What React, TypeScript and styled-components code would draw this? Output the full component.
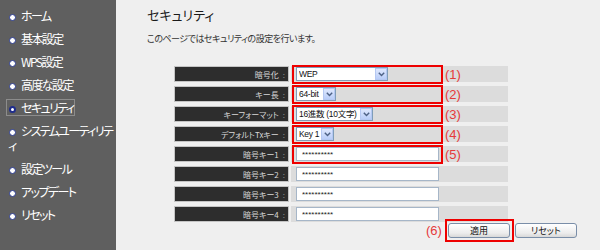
import React from "react";
import styled, { createGlobalStyle } from "styled-components";

const Global = createGlobalStyle`
  html, body { margin: 0; padding: 0; }
  body { width: 600px; height: 250px; overflow: hidden; background: #efefef;
    font-family: "Noto Sans CJK JP", "Liberation Sans", sans-serif; }
`;

const JP = `"Noto Sans CJK JP", "Liberation Sans", sans-serif`;
const Latin = `"Liberation Sans", "Noto Sans CJK JP", sans-serif`;

const Page = styled.div`
  display: flex;
  width: 600px;
  height: 250px;
`;

const Sidebar = styled.nav`
  width: 116px;
  flex: none;
  background: #5f5f5f;
  padding-top: 8px;
  box-sizing: border-box;
`;

const Item = styled.div`
  padding: 0 0 0 6px;
  margin: 0 -4px 8px 0;
  font-family: ${JP};
  font-size: 12px;
  line-height: 15px;
  letter-spacing: -1.6px;
  line-break: anywhere;
  color: #ffffff;
  font-feature-settings: "palt";
`;

const Link = styled.span<{ $active?: boolean }>`
  display: inline-block;
  border: 1px solid ${(p) => (p.$active ? "#8c8c8c" : "transparent")};
  padding: 0 1px;
  margin: -1px 0;
`;

const Bullet = styled.span<{ $active?: boolean }>`
  display: inline-block;
  width: 7px;
  height: 7px;
  box-sizing: border-box;
  border-radius: 50%;
  margin: 0 5px 1px 1px;
  vertical-align: middle;
  background: #ffffff;
  border: ${(p) => (p.$active ? "2px solid #1f2d8c" : "1px solid #2a3a90")};
`;

const Main = styled.main`
  flex: 1;
  padding: 7px 0 0 31px;
  background: #efefef;
`;

const Title = styled.h1`
  margin: 0;
  font-family: ${JP};
  font-size: 13px;
  font-weight: normal;
  line-height: 16px;
  color: #1a1a1a;
  font-feature-settings: "palt";
`;

const Desc = styled.p`
  margin: 9px 0 0;
  font-family: ${JP};
  font-size: 9px;
  letter-spacing: -0.5px;
  line-height: 13px;
  color: #333333;
  font-feature-settings: "palt";
`;

const Table = styled.div`
  margin: 21px 0 0 27px;
  display: grid;
  grid-template-columns: 115px 217px;
  column-gap: 2px;
  row-gap: 4px;
  grid-auto-rows: 16px;
`;

const LabelCell = styled.div`
  background: #2d2d2d;
  border: 1px solid #c4c4c4;
  box-sizing: border-box;
  display: flex;
  align-items: center;
  justify-content: flex-end;
  padding-right: 3px;
  font-family: ${JP};
  font-size: 8px;
  color: #d8d8d8;
  font-feature-settings: "palt";
  white-space: nowrap;
`;

const Colon = styled.span`
  color: #8f8f8f;
  margin-left: 4px;
`;

const ValueCell = styled.div<{ $framed?: boolean }>`
  background: #dcdcdc;
  display: flex;
  align-items: center;
  padding-left: ${(p) => (p.$framed ? 1 : 5)}px;
`;

const Frame = styled.div<{ $w: number; $h: number }>`
  width: ${(p) => p.$w}px;
  height: ${(p) => p.$h}px;
  flex: none;
  box-sizing: border-box;
  border: 2px solid #ee0000;
  padding-left: 2px;
  display: flex;
  align-items: center;
`;

const Note = styled.span`
  margin-left: 2px;
  font-family: ${Latin};
  font-size: 13px;
  color: #e53a3a;
  white-space: nowrap;
`;

const SelectBox = styled.div<{ $w: number }>`
  width: ${(p) => p.$w}px;
  height: 14px;
  box-sizing: border-box;
  border: 1px solid #7f9db9;
  background: #ffffff;
  display: flex;
`;

const NativeSelect = styled.select`
  appearance: none;
  -webkit-appearance: none;
  flex: 1;
  min-width: 0;
  border: none;
  background: transparent;
  padding: 0 0 0 2px;
  margin: 0;
  font-family: ${Latin}, "Noto Sans CJK JP";
  font-size: 8.5px;
  letter-spacing: -0.3px;
  line-height: 12px;
  color: #111;
  outline: none;
  font-feature-settings: "palt";
`;

const ArrowBox = styled.span`
  width: 12px;
  flex: none;
  box-sizing: border-box;
  border: 1px solid #b5c8f2;
  background: linear-gradient(#dfe8fd, #b9cdf8);
  display: flex;
  align-items: center;
  justify-content: center;
`;

const TextInput = styled.input`
  width: 143px;
  height: 14px;
  box-sizing: border-box;
  border: 1px solid #a6b6c8;
  background: #fff;
  padding: 0 0 0 5px;
  margin: 0;
  font-family: ${Latin};
  font-size: 8px;
  color: #222;
  outline: none;
`;

const ButtonRow = styled.div`
  display: flex;
  align-items: center;
  margin: -3px 0 0 277px;
`;

const ButtonFrame = styled.div`
  margin-left: 3px;
  border: 2px solid #ee0000;
  padding: 2px 2px 2px 1px;
  display: flex;
`;

const Button = styled.button`
  width: 62px;
  height: 15px;
  box-sizing: border-box;
  border: 1px solid #7a8ea8;
  border-radius: 3px;
  background: linear-gradient(#ffffff, #ececec 70%, #d8d8d8);
  font-family: ${JP};
  font-size: 9px;
  line-height: 12px;
  padding: 0;
  color: #111;
  font-feature-settings: "palt";
`;

const PlainButton = styled(Button)`
  margin-left: 1px;
`;

const Chevron = () => (
  <svg width="7" height="5" viewBox="0 0 7 5">
    <path d="M0.8 0.8 L3.5 3.6 L6.2 0.8" fill="none" stroke="#4d6185" strokeWidth="1.4" />
  </svg>
);

const Select = ({ w, value }: { w: number; value: string }) => (
  <SelectBox $w={w}>
    <NativeSelect value={value} onChange={() => {}}>
      <option>{value}</option>
    </NativeSelect>
    <ArrowBox>
      <Chevron />
    </ArrowBox>
  </SelectBox>
);

const nav = [
  "ホーム",
  "基本設定",
  "WPS設定",
  "高度な設定",
  "セキュリティ",
  "システムユーティリティ",
  "設定ツール",
  "アップデート",
  "リセット",
];

type Row = { label: string; note?: string; control: React.ReactNode };

const stars = "**********";

const rows: Row[] = [
  { label: "暗号化", note: "(1)", control: <Select w={92} value="WEP" /> },
  { label: "キー長", note: "(2)", control: <Select w={40} value="64-bit" /> },
  { label: "キーフォーマット", note: "(3)", control: <Select w={77} value="16進数 (10文字)" /> },
  { label: "デフォルトTxキー", note: "(4)", control: <Select w={38} value="Key 1" /> },
  { label: "暗号キー1", note: "(5)", control: <TextInput readOnly value={stars} /> },
  { label: "暗号キー2", control: <TextInput readOnly value={stars} /> },
  { label: "暗号キー3", control: <TextInput readOnly value={stars} /> },
  { label: "暗号キー4", control: <TextInput readOnly value={stars} /> },
];

export default function App() {
  return (
    <>
      <Global />
      <Page>
        <Sidebar>
          {nav.map((n) => (
            <Item key={n}>
              <Link $active={n === "セキュリティ"}>
                <Bullet $active={n === "セキュリティ"} />
                {n}
              </Link>
            </Item>
          ))}
        </Sidebar>
        <Main>
          <Title>セキュリティ</Title>
          <Desc>このページではセキュリティの設定を行います。</Desc>
          <Table>
            {rows.map((r) => (
              <React.Fragment key={r.label}>
                <LabelCell>
                  {r.label}
                  <Colon>:</Colon>
                </LabelCell>
                <ValueCell $framed={!!r.note}>
                  {r.note ? (
                    <>
                      <Frame $w={151} $h={19}>{r.control}</Frame>
                      <Note>{r.note}</Note>
                    </>
                  ) : (
                    r.control
                  )}
                </ValueCell>
              </React.Fragment>
            ))}
          </Table>
          <ButtonRow>
            <Note>(6)</Note>
            <ButtonFrame>
              <Button>適用</Button>
            </ButtonFrame>
            <PlainButton>リセット</PlainButton>
          </ButtonRow>
        </Main>
      </Page>
    </>
  );
}
